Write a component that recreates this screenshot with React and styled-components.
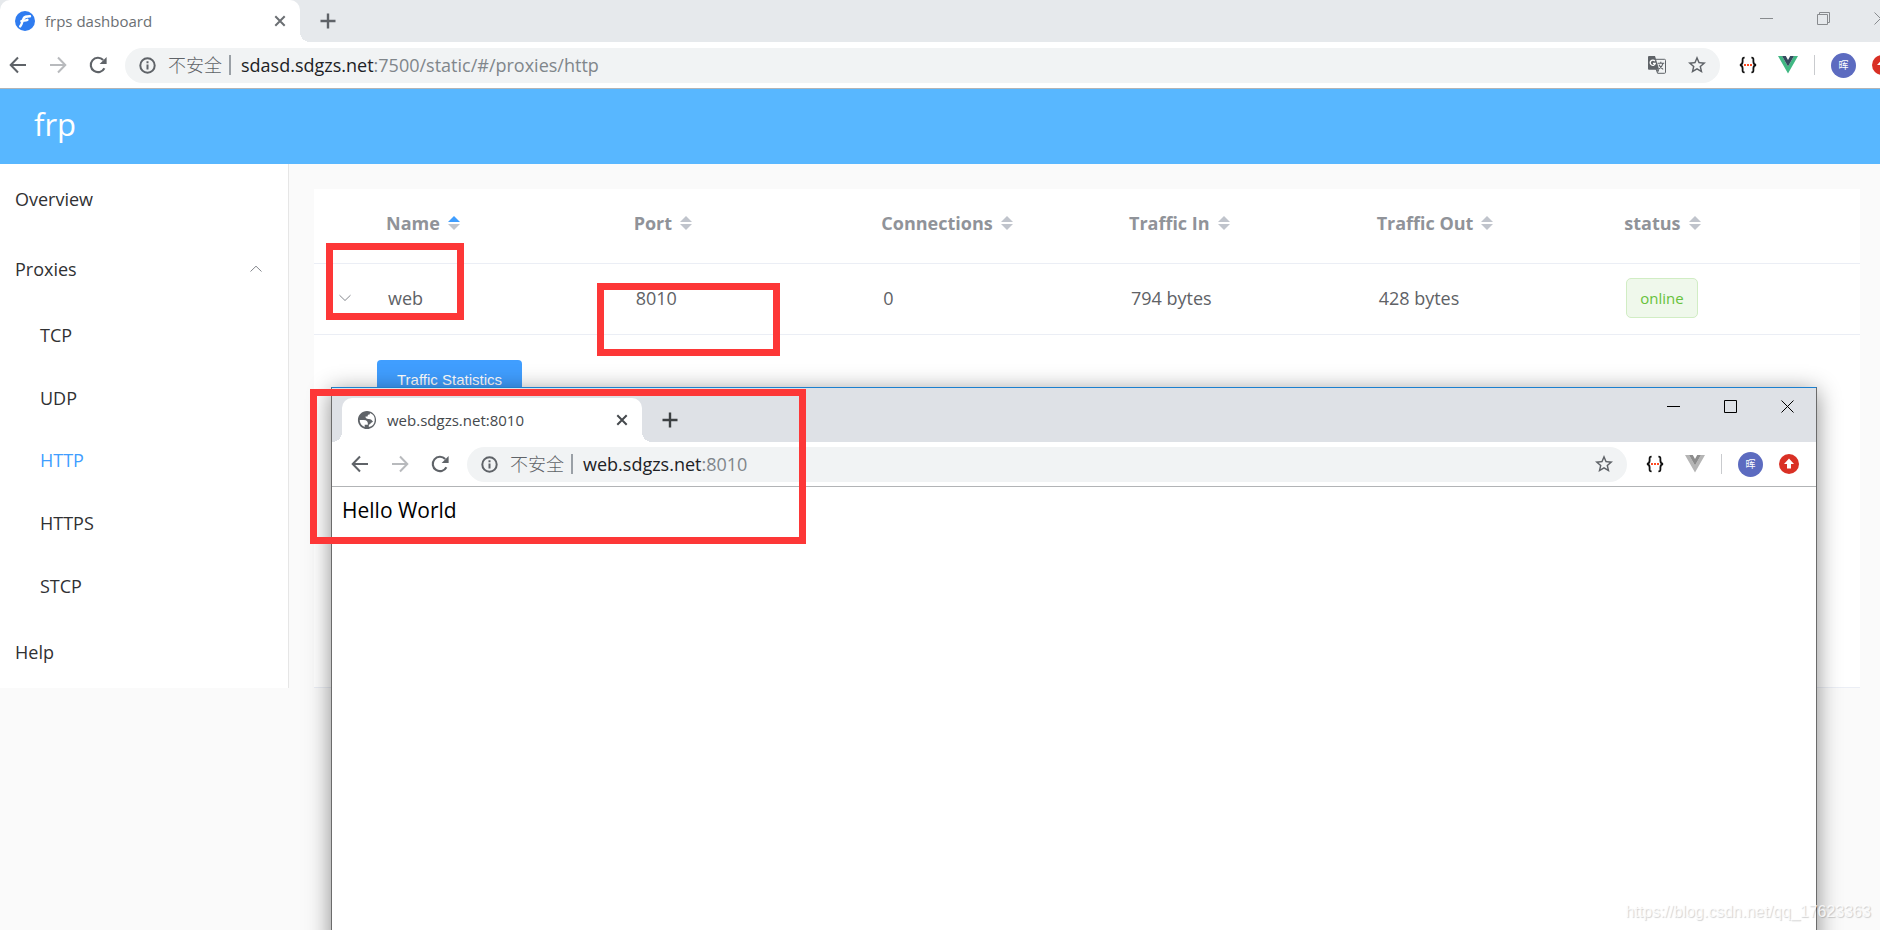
import React from 'react';
import styled, { createGlobalStyle, css } from 'styled-components';

const columns = ['Name', 'Port', 'Connections', 'Traffic In', 'Traffic Out', 'status'];
const proxyTypes = ['TCP', 'UDP', 'HTTP', 'HTTPS', 'STCP'];

const CloseIcon = () => (
    <svg width="12" height="12" viewBox="0 0 12 12" fill="none" stroke="currentColor" strokeWidth="2">
        <path d="M1.3 1.3l9.4 9.4M10.7 1.3l-9.4 9.4" />
    </svg>
);

const PlusIcon = () => (
    <svg width="16" height="16" viewBox="0 0 16 16" fill="none" stroke="currentColor" strokeWidth="2.4">
        <path d="M8 .5v15M.5 8h15" />
    </svg>
);

const ArrowIcon = ({ flip }) => (
    <svg width="18" height="18" viewBox="0 0 18 18" fill="none" stroke="currentColor" strokeWidth="2">
        <path d={flip ? 'M1 9h15M9 1.5L16.3 9 9 16.5' : 'M17 9H2M9 1.5L1.7 9 9 16.5'} />
    </svg>
);

const ReloadIcon = () => (
    <svg width="18" height="18" viewBox="0 0 18 18">
        <path d="M15.4 12.2A7.2 7.2 0 1 1 14.2 4" fill="none" stroke="currentColor" strokeWidth="2.1" />
        <path d="M17.6 1v7h-7z" fill="currentColor" />
    </svg>
);

const InfoIcon = () => (
    <svg width="17" height="17" viewBox="0 0 17 17" fill="none" stroke="currentColor" strokeWidth="2">
        <circle cx="8.5" cy="8.5" r="7.2" />
        <path d="M8.5 7.6v5M8.5 4.2v2" />
    </svg>
);

const StarIcon = () => (
    <svg width="18" height="18" viewBox="2 2 20 20" fill="currentColor">
        <path d="M22 9.24l-7.19-.62L12 2 9.19 8.63 2 9.24l5.46 4.73L5.82 21 12 17.27 18.18 21l-1.63-7.03L22 9.24zM12 15.4l-3.76 2.27 1-4.28-3.32-2.88 4.38-.38L12 6.1l1.71 4.04 4.38.38-3.32 2.88 1 4.28L12 15.4z" />
    </svg>
);

const TranslateIcon = () => (
    <svg width="18" height="18" viewBox="0 0 18 18">
        <path d="M7.5 3.3h9a1 1 0 0 1 1 1v12a1 1 0 0 1-1 1H9.6L8 13" fill="none" stroke="#5f6368" />
        <path d="M1 0h6l4.2 13.8H1a1 1 0 0 1-1-1V1a1 1 0 0 1 1-1z" fill="#5f6368" />
        <path d="M6.9 5.2A2.6 2.6 0 1 0 7.3 7.4H5" fill="none" stroke="#fff" strokeWidth="1.3" />
        <path d="M9.6 7.2h6.6M12.8 5.8v1.4M15 7.4c-.6 2.6-2.3 4.4-4 5.4M11 8.8c.8 1.8 2.4 3.4 4.2 4.6" fill="none" stroke="#5f6368" strokeWidth="1.1" />
        <path d="M9 14l2.2-.2L9.8 17z" fill="#5f6368" />
    </svg>
);

const BracesIcon = () => (
    <svg width="18" height="18" viewBox="0 0 18 18" fill="none">
        <path d="M5.6 1.6C3.2 1.6 3.6 3 3.6 5.4S3.2 8.6 1 9c2.2.4 2.6 1.2 2.6 3.6s-.4 3.8 2 3.8M12.4 1.6c2.4 0 2 1.4 2 3.8s.4 3.2 2.6 3.6c-2.2.4-2.6 1.2-2.6 3.6s.4 3.8-2 3.8" stroke="#111" strokeWidth="1.8" />
        <path d="M5 9h2M8 9h2M11 9h2" stroke="#ff4a22" strokeWidth="1.8" />
    </svg>
);

const VueIcon = ({ muted }) => (
    <svg width="20" height="18" viewBox="0 0 20 18">
        <path d="M0 0h4l6 10.4L16 0h4L10 17.4z" fill={muted ? '#b5b5b5' : '#41b883'} />
        <path d="M4 0h3.8L10 3.9 12.2 0H16l-6 10.4z" fill={muted ? '#8c8c8c' : '#34495e'} />
    </svg>
);

const UpdateIcon = () => (
    <svg width="20" height="20" viewBox="0 0 20 20">
        <circle cx="10" cy="10" r="10" fill="#d93025" />
        <path d="M10 4.6l5 5.4h-3v4.6H8V10H5z" fill="#fff" />
    </svg>
);

const FrpIcon = () => (
    <svg width="20" height="20" viewBox="0 0 20 20">
        <circle cx="10" cy="10" r="10" fill="#2f7cf0" />
        <path d="M5.2 15.4C7.2 13.4 7.2 10 8.4 7.8 9.4 5.6 11 5.4 15 5.2M6.4 10.2c2.4-.8 3.8-.4 6-1.4" fill="none" stroke="#fff" strokeWidth="2.4" strokeLinecap="round" />
    </svg>
);

const GlobeIcon = () => (
    <svg width="20" height="20" viewBox="1 1 22 22" fill="#5f6368">
        <path d="M12 2C6.48 2 2 6.48 2 12s4.48 10 10 10 10-4.48 10-10S17.52 2 12 2zM4 12h4.4c3.41.02 4.93 1.73 4.57 5.13H9.47v2.46A8.01 8.01 0 0 1 4 12zm10.01 7.75V17.1c2.1 0 2.1-2.5 4.6-3.1-1-2.3-2.7-3.4-5.1-3.2-2.1 0-3.2-.9-3.2-2.6h2.3c0-1.7.7-2.3 2.3-2.3l.4-1.5A8 8 0 0 1 14 19.75z" />
    </svg>
);

const MinimizeIcon = () => (
    <svg width="13" height="13" viewBox="0 0 13 13" stroke="currentColor"><path d="M0 6.5h13" /></svg>
);

const SizeIcon = ({ restore }) => (
    <svg width="13" height="13" viewBox="0 0 13 13" fill="none" stroke="currentColor">
        {restore ? <path d="M.5 2.5h10v10H.5zM2.5 2.5v-2h10v10h-2" /> : <path d="M.5 .5h12v12H.5z" />}
    </svg>
);

const ExitIcon = () => (
    <svg width="13" height="13" viewBox="0 0 13 13" stroke="currentColor"><path d="M.5 .5l12 12M12.5 .5l-12 12" /></svg>
);

const ChevronIcon = ({ up }) => (
    <svg width="12" height="8" viewBox="0 0 12 8" fill="none" stroke="#84878d">
        <path d={up ? 'M.5 6.5L6 1.2l5.5 5.3' : 'M.5 1.2L6 6.5l5.5-5.3'} />
    </svg>
);

const SortIcon = ({ active }) => (
    <svg width="12" height="14" viewBox="0 0 12 14">
        <path d="M0 6l6-6 6 6z" fill={active ? '#409eff' : '#c0c4cc'} />
        <path d="M0 8l6 6 6-6z" fill="#c0c4cc" />
    </svg>
);

const Browser = ({ url, path, title, favicon, maximized, children }) => (
    <>
        <TabStrip $maximized={maximized}>
            <Tab $maximized={maximized}>
                {favicon}
                <TabTitle>{title}</TabTitle>
                <IconButton aria-label="Close tab"><CloseIcon /></IconButton>
            </Tab>
            <NewTab aria-label="New tab"><PlusIcon /></NewTab>
            <WindowControls $maximized={maximized}>
                <IconButton aria-label="Minimize"><MinimizeIcon /></IconButton>
                <IconButton aria-label="Resize"><SizeIcon restore={maximized} /></IconButton>
                <IconButton aria-label="Close window"><ExitIcon /></IconButton>
            </WindowControls>
        </TabStrip>
        <Toolbar $maximized={maximized}>
            <NavButtons>
                <IconButton aria-label="Back"><ArrowIcon /></IconButton>
                <IconButton aria-label="Forward" disabled><ArrowIcon flip /></IconButton>
                <IconButton aria-label="Reload"><ReloadIcon /></IconButton>
            </NavButtons>
            <AddressBar>
                <InfoIcon />
                <Insecure>不安全</Insecure>
                <Url><b>{url}</b>{path}</Url>
                {maximized && <IconButton aria-label="Translate"><TranslateIcon /></IconButton>}
                <IconButton aria-label="Bookmark"><StarIcon /></IconButton>
            </AddressBar>
            <Extensions>
                <IconButton aria-label="JSON viewer"><BracesIcon /></IconButton>
                <IconButton aria-label="Vue devtools"><VueIcon muted={!maximized} /></IconButton>
                <Divider />
                <Avatar>晖</Avatar>
                <IconButton aria-label="Update"><UpdateIcon /></IconButton>
            </Extensions>
        </Toolbar>
        {children}
    </>
);

const App = () => (
    <Desktop>
        <GlobalStyle />
        <MainWindow>
            <Browser
                maximized
                title="frps dashboard"
                favicon={<FrpIcon />}
                url="sdasd.sdgzs.net"
                path=":7500/static/#/proxies/http"
            />
        </MainWindow>
        <Header>frp</Header>
        <Page>
            <Sidebar>
                <MenuLink href="#/">Overview</MenuLink>
                <SubmenuTitle>Proxies<ChevronIcon up /></SubmenuTitle>
                <Submenu>
                    {proxyTypes.map(type => (
                        <li key={type}>
                            <SubmenuLink href={`#/proxies/${type.toLowerCase()}`} $active={type === 'HTTP'}>{type}</SubmenuLink>
                        </li>
                    ))}
                </Submenu>
                <MenuLink href="#/help">Help</MenuLink>
            </Sidebar>
            <Content>
                <ProxyTable>
                    <thead>
                        <tr>
                            <HeadCell $narrow />
                            {columns.map(name => (
                                <HeadCell key={name}>
                                    <SortLabel>{name}<SortIcon active={name === 'Name'} /></SortLabel>
                                </HeadCell>
                            ))}
                        </tr>
                    </thead>
                    <tbody>
                        <tr>
                            <ExpandCell><IconButton aria-label="Collapse row"><ChevronIcon /></IconButton></ExpandCell>
                            <Cell>web</Cell>
                            <Cell>8010</Cell>
                            <Cell>0</Cell>
                            <Cell>794 bytes</Cell>
                            <Cell>428 bytes</Cell>
                            <Cell><Tag>online</Tag></Cell>
                        </tr>
                        <tr>
                            <DetailCell colSpan="7"><StatsButton>Traffic Statistics</StatsButton></DetailCell>
                        </tr>
                    </tbody>
                </ProxyTable>
            </Content>
        </Page>
        <PopupWindow>
            <Browser title="web.sdgzs.net:8010" favicon={<GlobeIcon />} url="web.sdgzs.net" path=":8010">
                <Hello>Hello World</Hello>
            </Browser>
        </PopupWindow>
        <Highlight $left={326} $top={243} $width={138} $height={77} />
        <Highlight $left={597} $top={283} $width={183} $height={73} />
        <Highlight $left={310} $top={389} $width={496} $height={155} />
        <Watermark>https://blog.csdn.net/qq_17623363</Watermark>
    </Desktop>
);

const GlobalStyle = createGlobalStyle`
    * {
        box-sizing: border-box;
    }
    body {
        margin: 0;
        background: #fafafa;
        color: #303133;
        font-family: "Open Sans", "Noto Sans CJK SC", sans-serif;
        font-size: 18px;
    }
    button {
        font: inherit;
        cursor: pointer;
    }
    a {
        text-decoration: none;
    }
    svg {
        display: block;
        flex: none;
    }
`;

const Desktop = styled.div`
    position: relative;
    min-height: 100vh;
    overflow: hidden;
`;

/* a maximized window runs past the right edge of the screen */
const MainWindow = styled.div`
    margin-right: -29px;
`;

const PopupWindow = styled.section`
    position: absolute;
    top: 387px;
    left: 331px;
    right: 63px;
    bottom: -20px;
    background: #fff;
    border: 1px solid #6b6b6b;
    border-top-color: #1c80cf;
    box-shadow: 0 4px 22px rgba(0, 0, 0, 0.45);
`;

const IconButton = styled.button`
    display: flex;
    align-items: center;
    padding: 0;
    border: 0;
    background: none;
    color: inherit;
    &:disabled {
        color: #b8babd;
    }
`;

const TabStrip = styled.div`
    display: flex;
    height: ${props => (props.$maximized ? '42px' : '54px')};
    padding: ${props => (props.$maximized ? '0' : '10px 0 0 10px')};
    background: ${props => (props.$maximized ? '#e6e9ec' : '#dee1e6')};
    color: ${props => (props.$maximized ? '#5f6368' : '#3c4043')};
`;

const Tab = styled.div`
    position: relative;
    display: flex;
    align-items: center;
    width: 300px;
    padding: 0 14px 0 15px;
    border-radius: 10px 10px 0 0;
    background: #fff;
    color: ${props => (props.$maximized ? '#6b6f73' : '#45494d')};
    &::before,
    &::after {
        content: "";
        position: absolute;
        bottom: 0;
        width: 10px;
        height: 10px;
    }
    &::before {
        right: 100%;
        background: radial-gradient(circle at 0 0, transparent 10px, #fff 10px);
    }
    &::after {
        left: 100%;
        background: radial-gradient(circle at 100% 0, transparent 10px, #fff 10px);
    }
`;

const TabTitle = styled.span`
    flex: 1;
    padding-left: 10px;
    font-size: 15px;
`;

const NewTab = styled(IconButton)`
    margin-left: 20px;
`;

const WindowControls = styled.div`
    display: flex;
    gap: 44px;
    align-items: flex-start;
    margin-left: auto;
    padding: ${props => (props.$maximized ? '12px 22px 0 0' : '2px 22px 0 0')};
    color: ${props => (props.$maximized ? '#888b8e' : '#000')};
`;

const Toolbar = styled.div`
    display: flex;
    align-items: center;
    height: ${props => (props.$maximized ? '47px' : '45px')};
    padding: ${props => (props.$maximized ? '0 17px 0 9px' : '0 17px 0 19px')};
    border-bottom: 1px solid #b2b4b6;
    background: #fff;
    color: #5f6368;
`;

const NavButtons = styled.div`
    display: flex;
    gap: 22px;
    margin-right: 18px;
`;

const AddressBar = styled.div`
    display: flex;
    flex: 1;
    align-items: center;
    gap: 22px;
    height: 35px;
    padding: 0 14px;
    border-radius: 18px;
    background: #f1f3f4;
`;

const Insecure = styled.span`
    margin-left: -10px;
    padding-right: 7px;
    border-right: 2px solid #9aa0a6;
    font-size: 18px;
    line-height: 20px;
    font-weight: 300;
`;

const Url = styled.span`
    flex: 1;
    margin-left: -12px;
    line-height: 24px;
    color: #80868b;
    b {
        color: #202124;
        font-weight: 400;
    }
`;

const Extensions = styled.div`
    display: flex;
    align-items: center;
    margin-left: 19px;
    gap: 16px;
    > :nth-child(1) {
        margin-right: 5px;
    }
`;

const Divider = styled.span`
    width: 1px;
    height: 20px;
    background: #c9cbce;
`;

const Avatar = styled.span`
    width: 25px;
    height: 25px;
    border-radius: 50%;
    background: #5c6bc0;
    color: #fff;
    font-size: 10px;
    line-height: 25px;
    text-align: center;
`;

const Header = styled.header`
    height: 75px;
    padding-left: 34px;
    background: #58b7ff;
    color: #fff;
    font-size: 31px;
    line-height: 70px;
`;

const Page = styled.div`
    display: flex;
`;

const Sidebar = styled.nav`
    width: 289px;
    border-right: 1px solid #e6e6e6;
    background: #fff;
`;

const menuItem = css`
    display: flex;
    align-items: center;
    justify-content: space-between;
    width: 100%;
    height: 70px;
    padding: 0 26px 0 15px;
    border: 0;
    background: none;
    color: #303133;
`;

const MenuLink = styled.a`
    ${menuItem}
`;

const SubmenuTitle = styled.button`
    ${menuItem}
`;

const Submenu = styled.ul`
    display: grid;
    grid-auto-rows: 1fr;
    height: 313px;
    margin: 0;
    padding: 0;
    list-style: none;
`;

const SubmenuLink = styled.a`
    ${menuItem}
    height: 100%;
    padding-left: 40px;
    color: ${props => (props.$active ? '#409eff' : '#303133')};
`;

const Content = styled.main`
    flex: 1;
    padding: 25px 20px 0 25px;
`;

const ProxyTable = styled.table`
    width: 100%;
    border-collapse: collapse;
    table-layout: fixed;
    background: #fff;
    color: #606266;
`;

const Cell = styled.td`
    height: 71px;
    padding: 0 14px 2px;
    border-bottom: 1px solid #ebeef5;
`;

const HeadCell = styled.th`
    width: ${props => (props.$narrow ? '60px' : 'auto')};
    height: 74px;
    padding: 0 12px 5px;
    border-bottom: 1px solid #ebeef5;
    color: #909399;
    text-align: left;
`;

const SortLabel = styled.span`
    display: flex;
    align-items: center;
    gap: 8px;
`;

const ExpandCell = styled(Cell)`
    padding-left: 25px;
`;

const DetailCell = styled(Cell)`
    height: 353px;
    padding: 25px 63px;
    vertical-align: top;
`;

const StatsButton = styled.button`
    height: 40px;
    padding: 0 20px;
    border: 0;
    border-radius: 4px;
    background: #409eff;
    color: #fff;
    font-family: "Liberation Sans", Arial, sans-serif;
    font-size: 15px;
`;

const Tag = styled.span`
    display: inline-block;
    height: 40px;
    padding: 0 13px;
    border: 1px solid #d1edc4;
    border-radius: 5px;
    background: #eff8eb;
    color: #67c23a;
    font-size: 15px;
    line-height: 38px;
`;

const Hello = styled.p`
    margin: 8px 10px;
    color: #000;
    font-size: 21px;
    line-height: 30px;
`;

const Highlight = styled.div`
    position: absolute;
    left: ${props => props.$left}px;
    top: ${props => props.$top}px;
    width: ${props => props.$width}px;
    height: ${props => props.$height}px;
    border: 7px solid #fd3737;
    pointer-events: none;
`;

const Watermark = styled.span`
    position: absolute;
    right: 9px;
    bottom: 9px;
    color: rgba(255, 255, 255, 0.8);
    font-family: "Liberation Sans", Arial, sans-serif;
    font-size: 16px;
    text-shadow: 1px 1px 1px rgba(0, 0, 0, 0.18);
`;

export default App;
